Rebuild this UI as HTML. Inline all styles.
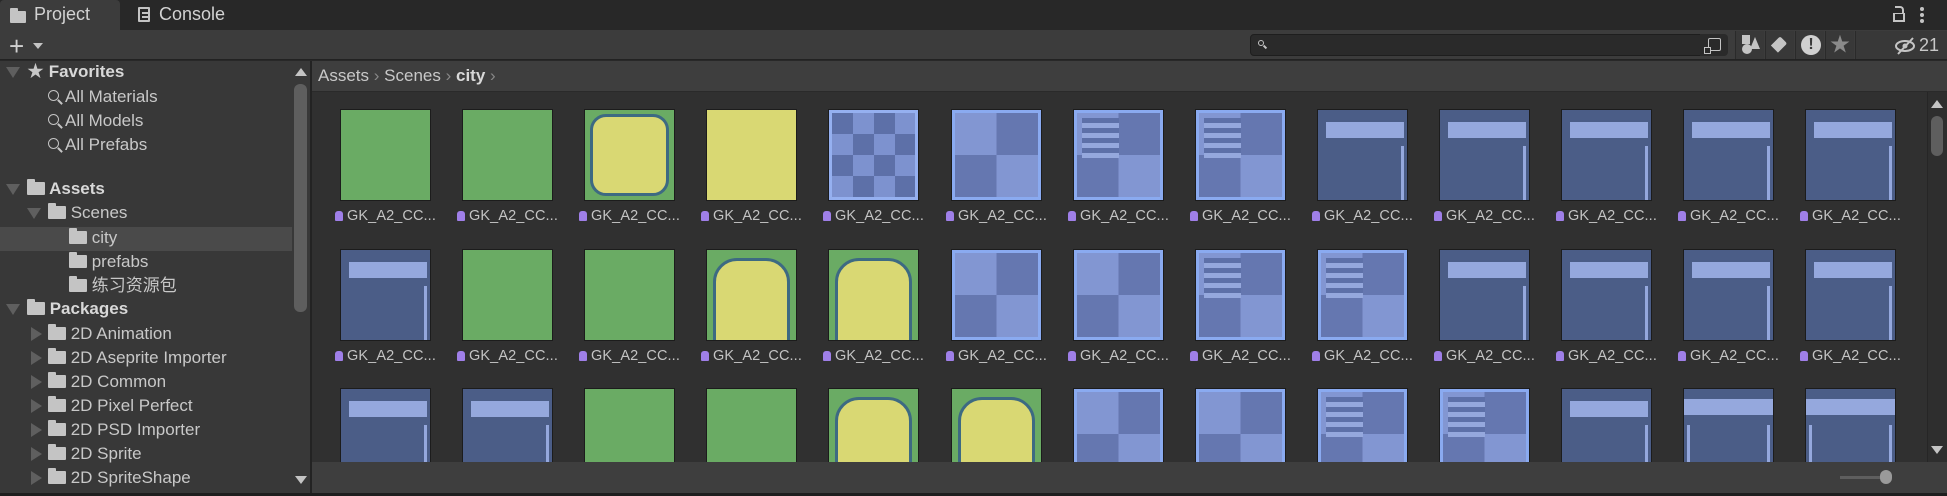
<!DOCTYPE html>
<html><head><meta charset="utf-8"><style>
*{margin:0;padding:0;box-sizing:border-box}
html,body{width:1947px;height:496px;overflow:hidden}
body{background:#282828;font-family:"Liberation Sans","Noto Sans CJK SC",sans-serif;color:#c8c8c8;position:relative;font-size:16px}
.abs{position:absolute}
#tabs{left:0;top:0;width:1947px;height:30px;background:#282828}
#tab1{left:0;top:0;width:120px;height:30px;background:#3c3c3c;border-radius:4px 4px 0 0}
#tool{left:0;top:30px;width:1947px;height:30px;background:#3c3c3c;border-bottom:1px solid #222}
#left{left:0;top:61px;width:292px;height:432px;background:#383838}
#lscroll{left:292px;top:61px;width:18px;height:432px;background:#383838}
#div{left:310px;top:61px;width:2px;height:432px;background:#232323}
#crumb{left:312px;top:61px;width:1635px;height:31px;background:#3e3e3e;border-bottom:1px solid #2a2a2a}
#grid{left:312px;top:92px;width:1615px;height:370px;background:#303030;overflow:hidden}
#rscroll{left:1927px;top:92px;width:20px;height:370px;background:#2e2e2e;border-left:1px solid #262626}
#bottom{left:312px;top:462px;width:1635px;height:31px;background:#3e3e3e}
#bline{left:0;top:493px;width:1947px;height:3px;background:#1e1e1e}
.row{position:absolute;height:24px;line-height:24px;white-space:nowrap;font-size:17px}
.fold{display:inline-block;width:18px;height:13px;background:#c4c4c4;border-radius:1px;vertical-align:-1px;position:relative}
.fold:before{content:"";position:absolute;left:0;top:-3px;width:8px;height:4px;background:#c4c4c4;border-radius:1px 1px 0 0}
.mag{display:inline-block;width:11px;height:11px;border:1.5px solid #c4c4c4;border-radius:50%;position:relative;margin-right:6px;vertical-align:1px}
.mag:after{content:"";position:absolute;left:8px;top:10px;width:6px;height:2px;background:#c4c4c4;transform:rotate(45deg)}
.tri{position:absolute;width:0;height:0}
.down{border-left:7px solid transparent;border-right:7px solid transparent;border-top:11px solid #5f5f5f}
.right{border-top:7px solid transparent;border-bottom:7px solid transparent;border-left:11px solid #5f5f5f}
.tile{position:absolute;width:89px;height:90px;overflow:hidden;box-shadow:0 0 0 1px #1c1c1c}
.lbl{position:absolute;font-size:14.5px;color:#c4c4c4;white-space:nowrap;letter-spacing:0.1px}
.lbl i{display:inline-block;width:8px;height:10px;background:#9f7fe8;border-radius:3px 3px 1px 1px;margin-right:4px;vertical-align:-1px}
.ib{position:absolute;top:31px;width:29px;height:28px;background:#383838;border-left:1px solid #2a2a2a}
</style></head><body>
<div id="tabs" class="abs"></div>
<div id="tab1" class="abs"></div>
<div class="abs" style="left:10px;top:9px"><span class="fold" style="width:16px;height:12px"></span></div>
<div class="abs" style="left:34px;top:4px;font-size:18px;color:#d2d2d2">Project</div>
<div class="abs" style="left:138px;top:7px;width:12px;height:15px;border:2px solid #c4c4c4;border-radius:1px;background:linear-gradient(#c4c4c4,#c4c4c4) 2px 3px/6px 2px no-repeat,linear-gradient(#c4c4c4,#c4c4c4) 2px 7px/6px 2px no-repeat"></div>
<div class="abs" style="left:159px;top:4px;font-size:18px;color:#d2d2d2">Console</div>
<div class="abs" style="left:1895px;top:6px;width:9px;height:7px;border:2px solid #c4c4c4;border-bottom:none;border-left:none;border-radius:0 4px 0 0"></div>
<div class="abs" style="left:1893px;top:13px;width:12px;height:9px;border:2px solid #c4c4c4;border-top:1px solid #c4c4c4"></div>
<div class="abs" style="left:1920px;top:7px;width:4px;height:4px;background:#c4c4c4;border-radius:2px;box-shadow:0 6px 0 #c4c4c4,0 12px 0 #c4c4c4"></div>
<div id="tool" class="abs"></div>
<div class="abs" style="left:9px;top:36px;font-size:26px;line-height:20px;color:#d0d0d0">+</div>
<div class="abs" style="left:33px;top:43px;border-left:5px solid transparent;border-right:5px solid transparent;border-top:6px solid #c4c4c4"></div>
<div class="abs" style="left:1250px;top:34px;width:460px;height:22px;background:#2a2a2a;border:1px solid #1e1e1e;border-radius:4px"></div>
<div class="abs" style="left:1258px;top:40px;width:6px;height:6px;border:1.5px solid #c4c4c4;border-radius:50%"></div>
<div class="abs" style="left:1263px;top:46px;width:4px;height:2px;background:#c4c4c4;transform:rotate(45deg)"></div>
<div class="abs" style="left:1700px;top:34px;width:28px;height:22px;background:#2a2a2a;border-radius:0 4px 4px 0"></div>
<div class="abs" style="left:1708px;top:38px;width:13px;height:13px;border:1.5px solid #c4c4c4;border-radius:2px"></div>
<div class="abs" style="left:1704px;top:47px;width:7px;height:7px;border:1.5px solid #c4c4c4;background:#2a2a2a"></div>
<div class="ib" style="left:1735px"><div class="abs" style="left:6px;top:13px;width:10px;height:10px;border-radius:50%;background:#c4c4c4"></div><div class="abs" style="left:6px;top:4px;width:8px;height:9px;background:#c4c4c4"></div><div class="abs" style="left:14px;top:6px;border-left:5px solid transparent;border-right:5px solid transparent;border-bottom:12px solid #c4c4c4"></div></div>
<div class="ib" style="left:1765px"><div class="abs" style="left:8px;top:7px;width:10px;height:13px;background:#c4c4c4;transform:rotate(45deg);border-radius:2px 2px 0 0"></div></div>
<div class="ib" style="left:1795px"><div class="abs" style="left:5px;top:4px;width:20px;height:20px;border-radius:50%;background:#d0d0d0;color:#383838;font-weight:bold;text-align:center;line-height:20px;font-size:16px">!</div></div>
<div class="ib" style="left:1825px;color:#8a8a8a;font-size:20px;text-align:center;line-height:28px">★</div>
<div class="ib" style="left:1855px;width:92px"></div>
<svg class="abs" style="left:1894px;top:36px" width="24" height="20"><ellipse cx="11" cy="10" rx="9" ry="5" fill="none" stroke="#c4c4c4" stroke-width="2"/><circle cx="11" cy="10" r="2.5" fill="#c4c4c4"/><line x1="4" y1="18" x2="19" y2="2" stroke="#c4c4c4" stroke-width="2"/></svg>
<div class="abs" style="left:1919px;top:33px;font-size:18px;line-height:24px;color:#c8c8c8">21</div>

<div id="left" class="abs"></div>
<div id="lscroll" class="abs"></div>
<div class="abs" style="left:295px;top:68px;border-left:6px solid transparent;border-right:6px solid transparent;border-bottom:8px solid #c4c4c4"></div>
<div class="abs" style="left:294px;top:84px;width:13px;height:228px;background:#5e5e5e;border-radius:6px"></div>
<div class="abs" style="left:295px;top:476px;border-left:6px solid transparent;border-right:6px solid transparent;border-top:8px solid #c4c4c4"></div>
<div id="div" class="abs"></div>

<div class="abs" style="left:0;top:227px;width:292px;height:24px;background:#4a4a4a"></div>
<div class="tri down" style="left:6px;top:67px"></div>
<div class="row" style="left:27px;top:60px;font-weight:bold;color:#d8d8d8"><span style="color:#c8c8c8">★</span> Favorites</div>
<div class="row" style="left:48px;top:85px"><span class="mag"></span>All Materials</div>
<div class="row" style="left:48px;top:109px"><span class="mag"></span>All Models</div>
<div class="row" style="left:48px;top:133px"><span class="mag"></span>All Prefabs</div>
<div class="tri down" style="left:6px;top:184px"></div>
<div class="row" style="left:27px;top:177px;font-weight:bold;color:#d8d8d8"><span class="fold"></span> Assets</div>
<div class="tri down" style="left:27px;top:208px"></div>
<div class="row" style="left:48px;top:201px"><span class="fold"></span> Scenes</div>
<div class="row" style="left:69px;top:226px"><span class="fold"></span> city</div>
<div class="row" style="left:69px;top:250px"><span class="fold"></span> prefabs</div>
<div class="row" style="left:69px;top:274px"><span class="fold"></span> 练习资源包</div>
<div class="tri down" style="left:6px;top:304px"></div>
<div class="row" style="left:27px;top:297px;font-weight:bold;color:#d8d8d8"><span class="fold"></span> Packages</div>
<div id="pk"></div>

<div id="crumb" class="abs"></div>
<div class="abs" style="left:318px;top:64px;font-size:17px;line-height:24px;color:#c8c8c8">Assets <span style="color:#888">›</span> Scenes <span style="color:#888">›</span> <b style="color:#d8d8d8">city</b> <span style="color:#888">›</span></div>
<div id="grid" class="abs"></div>
<div id="rscroll" class="abs"></div>
<div class="abs" style="left:1931px;top:100px;border-left:6px solid transparent;border-right:6px solid transparent;border-bottom:8px solid #c4c4c4"></div>
<div class="abs" style="left:1931px;top:116px;width:12px;height:40px;background:#5e5e5e;border-radius:6px"></div>
<div class="abs" style="left:1931px;top:446px;border-left:6px solid transparent;border-right:6px solid transparent;border-top:8px solid #c4c4c4"></div>
<div id="bottom" class="abs"></div>
<div class="abs" style="left:1840px;top:476px;width:48px;height:3px;background:#5e5e5e"></div>
<div class="abs" style="left:1880px;top:470px;width:12px;height:14px;background:#9a9a9a;border-radius:6px"></div>
<div id="bline" class="abs"></div>

<script>
var pk=["2D Animation","2D Aseprite Importer","2D Common","2D Pixel Perfect","2D PSD Importer","2D Sprite","2D SpriteShape"];
var h="";pk.forEach(function(n,i){var y=322+i*24;h+='<div class="tri right" style="left:31px;top:'+(y+5)+'px"></div><div class="row" style="left:48px;top:'+y+'px"><span class="fold"></span> '+n+'</div>';});
document.getElementById("pk").innerHTML=h;
var G="#6aab64",Y="#d9d873",D="#4b5d87",L="#95a8dd";
var quad='linear-gradient(90deg,transparent 50%,#6577b0 50%) top/100% 50% no-repeat,linear-gradient(90deg,#6577b0 50%,transparent 50%) bottom/100% 50% no-repeat,#8296d2';
function tile(t){
 if(t=="g")return ['background:'+G,''];
 if(t=="y")return ['background:'+Y,''];
 if(t=="b")return ['background:'+G,'<div style="position:absolute;left:5px;top:4px;right:5px;bottom:4px;background:'+Y+';border:3px solid #3d6a82;border-radius:16px"></div>'];
 if(t=="B")return ['background:'+G,'<div style="position:absolute;left:6px;top:8px;right:6px;bottom:-20px;background:'+Y+';border:3px solid #3d6a82;border-radius:24px 24px 0 0"></div>'];
 if(t=="c")return ['background:repeating-conic-gradient(#7d92cf 0 25%,#5d70a8 0 50%) 0 0/42px 42px;border:3px solid #95b0f0',''];
 if(t=="q")return ['background:'+quad+';border:3px solid #8aaaf0',''];
 if(t=="s")return ['background:repeating-linear-gradient(#5d70a8 0 5px,#95a8dd 5px 10px) 5px 5px/45% 40px no-repeat,'+quad+';border:3px solid #8aaaf0',''];
 if(t=="w")return ['background:linear-gradient('+L+','+L+') 8px 12px/78px 16px no-repeat,linear-gradient('+L+','+L+') 83px 36px/3px 54px no-repeat,'+D,''];
 if(t=="v")return ['background:linear-gradient('+L+','+L+') 0 10px/100% 16px no-repeat,linear-gradient('+L+','+L+') 3px 36px/3px 54px no-repeat,linear-gradient('+L+','+L+') 83px 36px/3px 54px no-repeat,'+D,''];
}
var rows=["ggbycqsswwwww","wggBBqqsswwww","wwggBBqqsswvv"];
var out="";
rows.forEach(function(r,ri){for(var i=0;i<13;i++){var x=Math.round(341+i*122.1-312),y=110+ri*139.5-92;var t=tile(r[i]);
 out+='<div class="tile" style="left:'+x+'px;top:'+y+'px;'+t[0]+'">'+t[1]+'</div>';
 out+='<div class="lbl" style="left:'+(x-6)+'px;top:'+(y+98)+'px"><i></i>GK_A2_CC...</div>';}});
document.getElementById("grid").innerHTML=out;
</script>
</body></html>
